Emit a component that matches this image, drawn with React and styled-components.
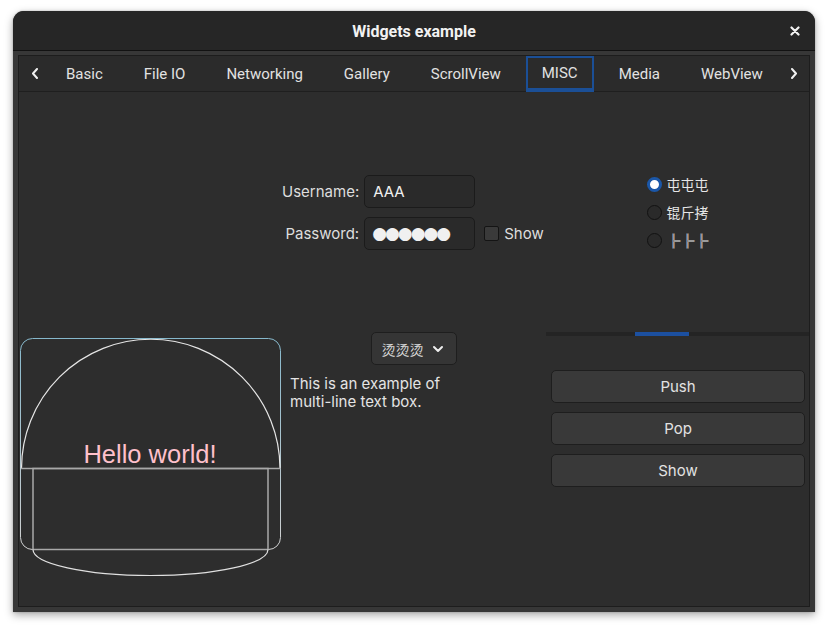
import styled, { createGlobalStyle } from 'styled-components';

const GlobalStyle = createGlobalStyle`
  body {
    margin: 0;
    background: #ffffff;
  }
  * {
    box-sizing: border-box;
  }
`;

const TABS = ['Basic', 'File IO', 'Networking', 'Gallery', 'ScrollView', 'MISC', 'Media', 'WebView'];
const RADIOS = ['屯屯屯', '锟斤拷', '╠╠╠'];

function Chevron({ dir }) {
  const d = dir === 'left' ? 'M6 1 L2 5.5 L6 10' : 'M2 1 L6 5.5 L2 10';
  return (
    <svg width="8" height="11" viewBox="0 0 8 11">
      <path d={d} fill="none" stroke="#f0f0f0" strokeWidth="2" strokeLinecap="round" strokeLinejoin="round" />
    </svg>
  );
}

function Canvas() {
  return (
    <svg width="263" height="250" viewBox="0 0 263 250">
      <defs>
        <linearGradient id="frame" x1="0" y1="0" x2="0" y2="1">
          <stop offset="0" stopColor="#86b8cc" />
          <stop offset="1" stopColor="#d0d0d0" />
        </linearGradient>
      </defs>
      <rect x="1.5" y="6.5" width="260" height="211" rx="12" fill="none" stroke="url(#frame)" strokeWidth="1" />
      <path d="M2.5 136.5 A129 129 0 0 1 261 136.5" fill="none" stroke="#e6e6e6" strokeWidth="1.2" />
      <line x1="2" y1="136.5" x2="261.5" y2="136.5" stroke="#a8a8a8" strokeWidth="1.5" />
      <rect x="14" y="136.5" width="235" height="81" fill="none" stroke="#a8a8a8" strokeWidth="1.5" />
      <path d="M14 217.5 A117.5 26 0 0 0 249 217.5" fill="none" stroke="#e0e0e0" strokeWidth="1.2" />
      <text x="131" y="131" textAnchor="middle" fill="#ffc0cb" fontFamily="'Liberation Sans', Arial, sans-serif" fontSize="25.5">
        Hello world!
      </text>
    </svg>
  );
}

export default function App() {
  return (
    <>
      <GlobalStyle />
      <Page>
        <Window>
          <TitleBar>
            <Title>Widgets example</Title>
            <CloseButton>
              <svg width="10" height="10" viewBox="0 0 10 10">
                <path d="M1.5 1.5 L8.5 8.5 M8.5 1.5 L1.5 8.5" stroke="#f2f2f2" strokeWidth="2.2" strokeLinecap="round" />
              </svg>
            </CloseButton>
          </TitleBar>
          <Body>
            <Panel>
              <TabBar>
                <ArrowButton>
                  <Chevron dir="left" />
                </ArrowButton>
                <TabList>
                  {TABS.map((t) => (
                    <Tab key={t} $active={t === 'MISC'}>
                      {t}
                    </Tab>
                  ))}
                </TabList>
                <ArrowButton $grow>
                  <Chevron dir="right" />
                </ArrowButton>
              </TabBar>
              <Content>
                <Cell />
                <FormCell>
                  <Form>
                    <Label>Username:</Label>
                    <Input>AAA</Input>
                    <span />
                    <Label>Password:</Label>
                    <Input $password>●●●●●●</Input>
                    <CheckRow>
                      <CheckBox />
                      Show
                    </CheckRow>
                  </Form>
                </FormCell>
                <RadioCell>
                  <RadioGroup>
                    {RADIOS.map((r, i) => (
                      <RadioRow key={r}>
                        <Radio $checked={i === 0} />
                        {r}
                      </RadioRow>
                    ))}
                  </RadioGroup>
                </RadioCell>
                <Cell>
                  <Canvas />
                </Cell>
                <MiddleCell>
                  <Combo>
                    烫烫烫
                    <svg width="12" height="8" viewBox="0 0 12 8">
                      <path d="M2 2 L6 6 L10 2" fill="none" stroke="#eeeeee" strokeWidth="2" strokeLinecap="round" strokeLinejoin="round" />
                    </svg>
                  </Combo>
                  <MultiLine>
                    This is an example of
                    <br />
                    multi-line text box.
                  </MultiLine>
                </MiddleCell>
                <RightCell>
                  <Slider>
                    <SliderHandle />
                  </Slider>
                  <ButtonStack>
                    <Button>Push</Button>
                    <Button>Pop</Button>
                    <Button>Show</Button>
                  </ButtonStack>
                </RightCell>
              </Content>
            </Panel>
          </Body>
        </Window>
      </Page>
    </>
  );
}

const Page = styled.div`
  width: 828px;
  height: 629px;
  padding: 11px 13px 0;
`;

const Window = styled.div`
  width: 802px;
  height: 601px;
  display: flex;
  flex-direction: column;
  background: #373737;
  border-radius: 11px 11px 0 0;
  box-shadow: 0 3px 9px rgba(0, 0, 0, 0.35), 0 0 2px rgba(0, 0, 0, 0.25);
  overflow: hidden;
`;

const TitleBar = styled.div`
  height: 40px;
  flex-shrink: 0;
  display: flex;
  align-items: center;
  justify-content: center;
  position: relative;
  background: #262626;
  border-bottom: 1px solid #121212;
`;

const Title = styled.div`
  font-family: Roboto, 'Noto Sans', sans-serif;
  font-weight: 700;
  font-size: 16px;
  color: #f2f2f2;
  margin-top: 1px;
`;

const CloseButton = styled.div`
  position: absolute;
  right: 15px;
  top: 15px;
  display: flex;
`;

const Body = styled.div`
  flex: 1;
  display: flex;
  padding: 4px 5px 5px;
`;

const Panel = styled.div`
  flex: 1;
  display: flex;
  flex-direction: column;
  background: #2d2d2d;
  border: 1px solid #1d1d1d;
`;

const TabBar = styled.div`
  height: 36px;
  flex-shrink: 0;
  display: flex;
  align-items: stretch;
  border-bottom: 1px solid #1f1f1f;
  background: #2b2b2b;
`;

const ArrowButton = styled.div`
  width: 31px;
  flex: ${(p) => (p.$grow ? 1 : 'none')};
  display: flex;
  align-items: center;
  justify-content: center;
  padding-left: ${(p) => (p.$grow ? '0' : '1px')};
`;

const TabList = styled.div`
  display: flex;
  gap: 9px;
`;

const Tab = styled.div`
  display: flex;
  align-items: center;
  padding: 0 14px;
  font-family: Roboto, 'Noto Sans', sans-serif;
  font-size: 15px;
  color: #e2e2e2;
  border: 2px solid ${(p) => (p.$active ? '#1b4f96' : 'transparent')};
  border-bottom-width: ${(p) => (p.$active ? '4px' : '2px')};
  margin-bottom: -1px;
`;

const Content = styled.div`
  flex: 1;
  display: grid;
  grid-template-columns: 263px 263px 1fr;
  grid-template-rows: 240px 1fr;
`;

const Cell = styled.div`
  display: flex;
`;

const FormCell = styled.div`
  display: flex;
  align-items: center;
`;

const Form = styled.div`
  display: grid;
  grid-template-columns: auto 111px auto;
  column-gap: 5px;
  row-gap: 9px;
  align-items: center;
  font-family: Inter, 'Noto Sans', sans-serif;
  font-size: 15px;
  color: #dedede;
`;

const Label = styled.div`
  text-align: right;
`;

const Input = styled.div`
  height: 33px;
  display: flex;
  align-items: center;
  padding-left: ${(p) => (p.$password ? '7px' : '8px')};
  background: #2a2a2a;
  border: 1px solid #1b1b1b;
  border-radius: 5px;
  color: #f0f0f0;
  font-family: ${(p) => (p.$password ? "'DejaVu Sans', sans-serif" : "Inter, 'Noto Sans', sans-serif")};
  font-size: ${(p) => (p.$password ? '17px' : '15px')};
  letter-spacing: ${(p) => (p.$password ? '-2px' : '0')};
`;

const CheckRow = styled.div`
  display: flex;
  align-items: center;
  gap: 5px;
  margin-left: 4px;
`;

const CheckBox = styled.div`
  width: 15px;
  height: 15px;
  background: #3a3a3a;
  border: 1px solid #141414;
  border-radius: 2px;
`;

const RadioCell = styled.div`
  display: flex;
  align-items: center;
  justify-content: center;
`;

const RadioGroup = styled.div`
  display: flex;
  flex-direction: column;
  gap: 6px;
  margin-left: 1px;
`;

const RadioRow = styled.div`
  display: flex;
  align-items: center;
  gap: 5px;
  height: 22px;
  font-family: Inter, 'Noto Sans CJK SC', sans-serif;
  font-size: 14px;
  color: #e6e6e6;
`;

const Radio = styled.div`
  width: 15px;
  height: 15px;
  border-radius: 50%;
  background: ${(p) => (p.$checked ? '#ffffff' : '#2a2a2a')};
  border: ${(p) => (p.$checked ? '3.5px solid #1b57a8' : '1px solid #121212')};
`;

const MiddleCell = styled.div`
  display: flex;
  flex-direction: column;
  align-items: center;
`;

const Combo = styled.div`
  width: 86px;
  height: 33px;
  display: flex;
  align-items: center;
  justify-content: space-between;
  padding: 0 12px 0 10px;
  background: #353535;
  border: 1px solid #1e1e1e;
  border-radius: 5px;
  font-family: 'Noto Sans CJK SC', sans-serif;
  font-size: 14px;
  color: #d8d8d8;
`;

const MultiLine = styled.div`
  align-self: stretch;
  padding-left: 8px;
  margin-top: 10px;
  font-family: Inter, 'Noto Sans', sans-serif;
  font-size: 15px;
  line-height: 18px;
  color: #e4e4e4;
`;

const RightCell = styled.div`
  display: flex;
  flex-direction: column;
`;

const Slider = styled.div`
  height: 4px;
  margin-left: 1px;
  background: #242424;
  display: flex;
  padding-left: 89px;
`;

const SliderHandle = styled.div`
  width: 54px;
  background: #1c50a0;
`;

const ButtonStack = styled.div`
  display: flex;
  flex-direction: column;
  gap: 9px;
  padding: 34px 4px 0 6px;
`;

const Button = styled.div`
  height: 33px;
  display: flex;
  align-items: center;
  justify-content: center;
  background: #393939;
  border: 1px solid #1e1e1e;
  border-radius: 5px;
  font-family: Inter, 'Noto Sans', sans-serif;
  font-size: 15px;
  color: #e2e2e2;
`;
